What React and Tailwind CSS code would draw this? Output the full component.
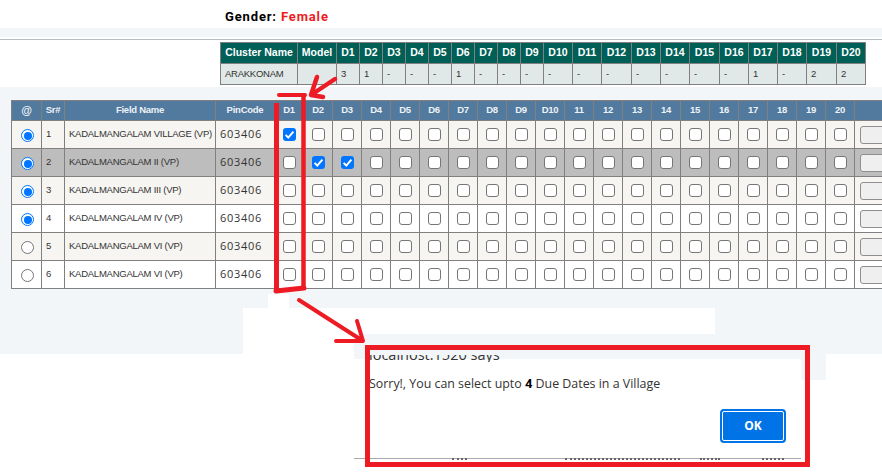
const clusterCols = [
  ['Cluster Name', 77, 'ARAKKONAM'], ['Model', 39, ''], ['D1', 23, '3'], ['D2', 23, '1'], ['D3', 23, '-'],
  ['D4', 23, '-'], ['D5', 23, '-'], ['D6', 23, '1'], ['D7', 23, '-'], ['D8', 23, '-'], ['D9', 23, '-'],
  ['D10', 29, '-'], ['D11', 29, '-'], ['D12', 30, '-'], ['D13', 29, '-'], ['D14', 29, '-'], ['D15', 30, '-'],
  ['D16', 29, '-'], ['D17', 29, '1'], ['D18', 29, '-'], ['D19', 30, '2'], ['D20', 29, '2'],
];

const dayHeads = ['D1', 'D2', 'D3', 'D4', 'D5', 'D6', 'D7', 'D8', 'D9', 'D10', '11', '12', '13', '14', '15', '16', '17', '18', '19', '20'];

const villages = [
  { sr: 1, name: 'KADALMANGALAM VILLAGE (VP)', on: true, checked: [0], bg: 'bg-[#f6f5f1]' },
  { sr: 2, name: 'KADALMANGALAM II (VP)', on: true, checked: [1, 2], bg: 'bg-[#bdbdbd]' },
  { sr: 3, name: 'KADALMANGALAM III (VP)', on: true, checked: [], bg: 'bg-[#f6f5f1]' },
  { sr: 4, name: 'KADALMANGALAM IV (VP)', on: true, checked: [], bg: 'bg-white' },
  { sr: 5, name: 'KADALMANGALAM VI (VP)', on: false, checked: [], bg: 'bg-[#f6f5f1]' },
  { sr: 6, name: 'KADALMANGALAM VI (VP)', on: false, checked: [], bg: 'bg-white' },
];

const Radio = ({ on }) =>
  on ? (
    <span className="ml-[9px] mt-[2px] block h-[13px] w-[13px] rounded-full border-[1.5px] border-[#0075ff] bg-white p-[1.5px]">
      <span className="block h-full w-full rounded-full bg-[#0075ff]" />
    </span>
  ) : (
    <span className="ml-[9px] mt-[2px] block h-[13px] w-[13px] rounded-full border border-[#767676] bg-white" />
  );

const Check = ({ on }) =>
  on ? (
    <span className="mx-auto flex h-[13px] w-[13px] items-center justify-center rounded-[3px] bg-[#0075ff]">
      <svg viewBox="0 0 13 13" className="h-[13px] w-[13px]">
        <path d="M2.6 6.9 5.3 9.6 10.4 3.6" fill="none" stroke="#fff" strokeWidth="2" />
      </svg>
    </span>
  ) : (
    <span className="mx-auto block h-[13px] w-[13px] rounded-[3px] border border-[#767676] bg-white" />
  );

export default function App() {
  return (
    <div className="relative h-[476px] w-[882px] overflow-hidden bg-white font-['Liberation_Sans',sans-serif]">
      <div className="h-[28px] pl-[225px] pt-[9px] font-['Roboto',sans-serif] text-[13px] leading-[15px] font-bold tracking-[0.85px] text-black">
        Gender: <span className="text-[#ed1c24]">Female</span>
      </div>
      <div className="h-[9px] bg-[#f3f6f9]" />
      <div className="mt-[2px] h-px bg-[#b9bec4]" />

      <div className="h-[47px] pl-[220px] pt-[2px]">
        <table className="table-fixed border-collapse text-[9.5px] tracking-[-0.25px]">
          <thead>
            <tr className="h-[21px] bg-[#005f56] text-[10.5px] tracking-normal text-white">
              {clusterCols.map(([head, w]) => (
                <th key={head} style={{ width: w }} className="border border-[#808080] p-0 font-bold">
                  {head}
                </th>
              ))}
            </tr>
          </thead>
          <tbody>
            <tr className="h-[21px] bg-[#e0e8e8] text-[#333]">
              {clusterCols.map(([head, , value]) => (
                <td key={head} className="border border-[#808080] py-0 pl-[4px] pr-0">
                  {value}
                </td>
              ))}
            </tr>
          </tbody>
        </table>
      </div>

      <div className="h-[267px] bg-[#f3f6f9]">
        <div className="h-[221px] pl-[11px] pt-[13px]">
          <table className="w-[900px] table-fixed border-collapse text-[9.5px] tracking-[-0.25px] text-[#333]">
            <colgroup>
              <col className="w-[30px]" />
              <col className="w-[23px]" />
              <col className="w-[151px]" />
              <col className="w-[59px]" />
              {dayHeads.map((d) => (
                <col key={d} className="w-[29px]" />
              ))}
              <col className="w-[57px]" />
            </colgroup>
            <thead>
              <tr className="h-[20px] bg-[#517a9e] text-[#eef2f6]">
                <th className="border border-[#808080] p-0 text-[11px] font-bold">@</th>
                <th className="border border-[#808080] p-0 font-bold">Sr#</th>
                <th className="border border-[#808080] p-0 font-bold">Field Name</th>
                <th className="border border-[#808080] p-0 font-bold">PinCode</th>
                {dayHeads.map((d) => (
                  <th key={d} className="border border-[#808080] p-0 font-bold">
                    {d}
                  </th>
                ))}
                <th className="border border-[#808080] p-0" />
              </tr>
            </thead>
            <tbody>
              {villages.map((v) => (
                <tr key={v.sr} className={`h-[28px] ${v.bg}`}>
                  <td className="border border-[#808080] p-0">
                    <Radio on={v.on} />
                  </td>
                  <td className="border border-[#808080] py-0 pl-[4px] pr-0">{v.sr}</td>
                  <td className="border border-[#808080] py-0 pl-[4px] pr-0 whitespace-nowrap">{v.name}</td>
                  <td className="border border-[#808080] py-0 pl-[4px] pr-0 font-['Open_Sans',sans-serif] text-[11px] tracking-[0.7px]">
                    603406
                  </td>
                  {dayHeads.map((d, i) => (
                    <td key={d} className="border border-[#808080] p-0">
                      <Check on={v.checked.includes(i)} />
                    </td>
                  ))}
                  <td className="border border-[#808080] py-0 pl-[5px] pr-0">
                    <span className="block h-[18px] w-[40px] rounded-[3px] border border-[#8f8f8f] bg-[#efefef]" />
                  </td>
                </tr>
              ))}
            </tbody>
          </table>
        </div>

        {/* white patches pasted over the page below the table */}
        <div className="flex h-[46px] pl-[243px]">
          <div className="w-[111px] bg-white" />
          <div className="h-[26px] w-[361px] bg-white" />
        </div>
      </div>

      {/* browser alert */}
      <div className="flex pl-[354px]">
        <div className="w-[447px]">
          <div className="h-[5px] bg-[#f3f6f9]" />
          <div className="flow-root h-[100px] border-b border-[#a9a9a9] bg-white pl-[15px] font-['Open_Sans',sans-serif] text-[#333]">
            <div className="-mt-[4px] h-[7px] overflow-hidden text-[14.5px] leading-[20px]">
              <div className="-mt-[10px]">localhost:1520 says</div>
            </div>
            <div className="mt-[13px] text-[12.4px] leading-[17px]">
              Sorry!, You can select upto <b className="font-['Roboto',sans-serif] text-[13px] text-black">4</b> Due Dates in a Village
            </div>
            <div className="mt-[17px] flex justify-end pr-[15px]">
              <button className="h-[34px] w-[66px] rounded-[4px] border-2 border-[#0073e6] bg-[#0073e6] text-[12px] font-bold text-white outline outline-1 -outline-offset-3 outline-white">
                OK
              </button>
            </div>
          </div>
          {/* tops of the page text showing under the alert */}
          <div className="-mt-[1px] flex pl-[98px]">
            <div className="w-[15px] border-t-2 border-dotted border-[#666]" />
            <div className="ml-[98px] w-[115px] border-t-2 border-dotted border-[#666]" />
            <div className="ml-[20px] w-[20px] border-t-2 border-dotted border-[#666]" />
            <div className="ml-[42px] w-[22px] border-t-2 border-dotted border-[#666]" />
          </div>
        </div>
        <div className="h-[26px] w-[25px] bg-[#f3f6f9]" />
      </div>

      <div className="absolute left-[268px] top-[294px] h-[14px] w-[21px] bg-white" />
      <div className="absolute left-[365px] top-[345px] h-[122px] w-[445px] border-[5px] border-[#ed1c24]" />

      {/* red hand-drawn marks */}
      <svg className="absolute left-0 top-0 h-[476px] w-[882px]" viewBox="0 0 882 476" fill="none" stroke="#ed1c24" strokeLinecap="round" strokeLinejoin="round">
        <path d="M279 95H305" strokeWidth="4" />
        <path d="M303.5 97V287" strokeWidth="4.5" />
        <path d="M276.5 103V291" strokeWidth="5" strokeLinecap="butt" />
        <path d="M276 291L304 288" strokeWidth="5" />
        <path d="M335 79L311 95M317 77L311 95L323 97" strokeWidth="4.5" />
        <path d="M299 300L363 341M357 321L363 341L336 341" strokeWidth="4" />
      </svg>
    </div>
  );
}
